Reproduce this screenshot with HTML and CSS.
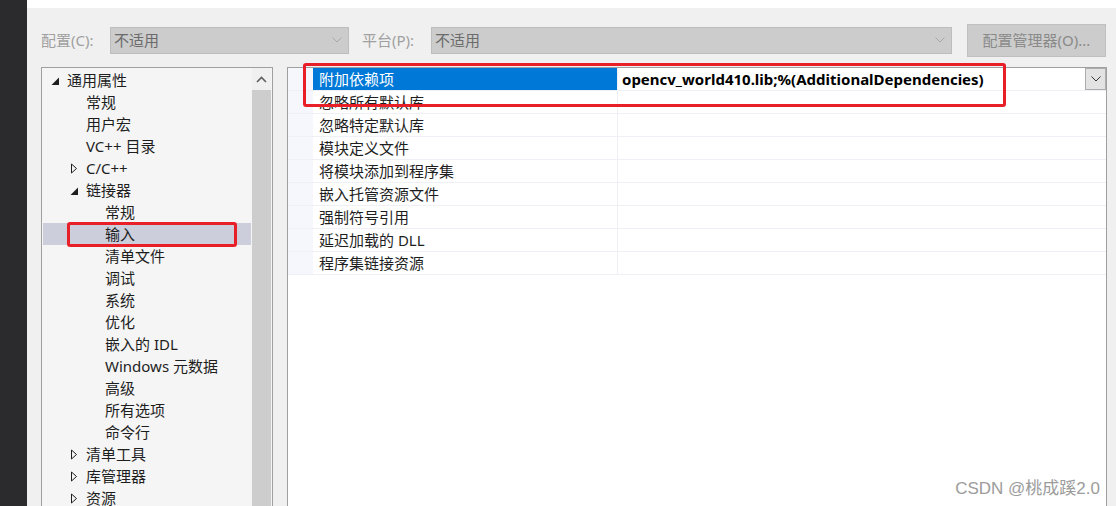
FILE: index.html
```html
<!DOCTYPE html>
<html lang="zh-CN">
<head>
    <meta charset="UTF-8">
    <title>属性页 - 链接器 - 输入</title>
    <link rel="stylesheet" href="styles.css">
</head>
<body>
    <div class="app">
        <div class="dock"></div>

        <div class="main">
            <div class="toolbar">
                <span class="tb-label">配置(C):</span>
                <div class="combo combo-config">
                    <span>不适用</span>
                    <svg class="combo-arrow" width="10" height="6" viewBox="0 0 10 6"><path d="M0.5 0.5 L5 5 L9.5 0.5" fill="none" stroke="#a9a9a9" stroke-width="1"/></svg>
                </div>
                <span class="tb-label">平台(P):</span>
                <div class="combo combo-platform">
                    <span>不适用</span>
                    <svg class="combo-arrow" width="10" height="6" viewBox="0 0 10 6"><path d="M0.5 0.5 L5 5 L9.5 0.5" fill="none" stroke="#a9a9a9" stroke-width="1"/></svg>
                </div>
                <button class="tb-button">配置管理器(O)...</button>
            </div>

            <div class="content">
                <!-- arbre des catégories -->
                <div class="tree-panel">
                    <ul class="tree">
                        <li class="lvl0"><svg class="twisty" width="16" height="22" viewBox="0 0 16 22"><polygon points="0.5,16 8,16 8,8.5" fill="#1e1e1e"/></svg>通用属性</li>
                        <li class="lvl1"><span class="twisty"></span>常规</li>
                        <li class="lvl1"><span class="twisty"></span>用户宏</li>
                        <li class="lvl1"><span class="twisty"></span>VC++ 目录</li>
                        <li class="lvl1"><svg class="twisty" width="16" height="22" viewBox="0 0 16 22"><polygon points="1.5,7 6.5,11.5 1.5,16" fill="none" stroke="#1e1e1e"/></svg>C/C++</li>
                        <li class="lvl1"><svg class="twisty" width="16" height="22" viewBox="0 0 16 22"><polygon points="0.5,16 8,16 8,8.5" fill="#1e1e1e"/></svg>链接器</li>
                        <li class="lvl2"><span class="twisty"></span>常规</li>
                        <li class="lvl2 selected"><span class="twisty"></span>输入<span class="mark mark-input"></span></li>
                        <li class="lvl2"><span class="twisty"></span>清单文件</li>
                        <li class="lvl2"><span class="twisty"></span>调试</li>
                        <li class="lvl2"><span class="twisty"></span>系统</li>
                        <li class="lvl2"><span class="twisty"></span>优化</li>
                        <li class="lvl2"><span class="twisty"></span>嵌入的 IDL</li>
                        <li class="lvl2"><span class="twisty"></span>Windows 元数据</li>
                        <li class="lvl2"><span class="twisty"></span>高级</li>
                        <li class="lvl2"><span class="twisty"></span>所有选项</li>
                        <li class="lvl2"><span class="twisty"></span>命令行</li>
                        <li class="lvl1"><svg class="twisty" width="16" height="22" viewBox="0 0 16 22"><polygon points="1.5,7 6.5,11.5 1.5,16" fill="none" stroke="#1e1e1e"/></svg>清单工具</li>
                        <li class="lvl1"><svg class="twisty" width="16" height="22" viewBox="0 0 16 22"><polygon points="1.5,7 6.5,11.5 1.5,16" fill="none" stroke="#1e1e1e"/></svg>库管理器</li>
                        <li class="lvl1"><svg class="twisty" width="16" height="22" viewBox="0 0 16 22"><polygon points="1.5,7 6.5,11.5 1.5,16" fill="none" stroke="#1e1e1e"/></svg>资源</li>
                    </ul>
                    <div class="scrollbar">
                        <div class="sb-up">
                            <svg width="11" height="7" viewBox="0 0 11 7"><path d="M1 6 L5.5 1.5 L10 6" fill="none" stroke="#606060" stroke-width="1.6"/></svg>
                        </div>
                        <div class="sb-thumb"></div>
                    </div>
                </div>

                <!-- grille des propriétés -->
                <div class="grid-panel">
                    <div class="prop-row selected">
                        <div class="gutter"></div>
                        <div class="prop-name">附加依赖项</div>
                        <div class="prop-value">
                            <span class="value-text">opencv_world410.lib;%(AdditionalDependencies)</span>
                            <span class="drop-btn">
                                <svg width="10" height="6" viewBox="0 0 10 6"><path d="M0.5 0.5 L5 5 L9.5 0.5" fill="none" stroke="#333" stroke-width="1"/></svg>
                            </span>
                        </div>
                    </div>
                    <div class="prop-row"><div class="gutter"></div><div class="prop-name">忽略所有默认库</div><div class="prop-value"></div></div>
                    <div class="prop-row"><div class="gutter"></div><div class="prop-name">忽略特定默认库</div><div class="prop-value"></div></div>
                    <div class="prop-row"><div class="gutter"></div><div class="prop-name">模块定义文件</div><div class="prop-value"></div></div>
                    <div class="prop-row"><div class="gutter"></div><div class="prop-name">将模块添加到程序集</div><div class="prop-value"></div></div>
                    <div class="prop-row"><div class="gutter"></div><div class="prop-name">嵌入托管资源文件</div><div class="prop-value"></div></div>
                    <div class="prop-row"><div class="gutter"></div><div class="prop-name">强制符号引用</div><div class="prop-value"></div></div>
                    <div class="prop-row"><div class="gutter"></div><div class="prop-name">延迟加载的 DLL</div><div class="prop-value"></div></div>
                    <div class="prop-row"><div class="gutter"></div><div class="prop-name">程序集链接资源</div><div class="prop-value"></div></div>

                    <span class="mark mark-deps"></span>
                </div>
            </div>
        </div>

        <div class="watermark">CSDN @桃成蹊2.0</div>
    </div>
</body>
</html>
```

FILE: styles.css
```css
* {
    margin: 0;
    padding: 0;
    box-sizing: border-box;
}

body {
    font-family: "Noto Sans", "Noto Sans CJK SC", sans-serif;
    font-size: 15px;
    color: #1e1e1e;
    background: #f0f0f0;
    overflow: hidden;
}

.app {
    position: relative;
    display: flex;
    width: 1116px;
    height: 506px;
    overflow: hidden;
}

.dock {
    width: 27px;
    background: #2b2b2d;
}

.main {
    flex: 1;
    display: flex;
    flex-direction: column;
    background: #f0f0f0;
    border-top: 8px solid #fff;
}

/* barre du haut */
.toolbar {
    display: flex;
    align-items: center;
    height: 33px;
    margin-top: 16px;
    padding-left: 14px;
    line-height: 20px;
}

.tb-label {
    width: 69px;
    margin-top: -2px;
    color: #a0a0a0;
    white-space: nowrap;
}

.combo {
    display: flex;
    align-items: center;
    justify-content: space-between;
    height: 27px;
    padding: 0 6px 2px 3px;
    background: #cccccc;
    border: 1px solid #bdbdbd;
    color: #6b6b6b;
}

.combo-config {
    width: 239px;
    margin-right: 13px;
}

.combo-platform {
    width: 521px;
    margin-right: 15px;
}

.tb-button {
    width: 139px;
    height: 33px;
    padding-bottom: 2px;
    background: #cccccc;
    border: 1px solid #c0c0c0;
    color: #8a8a8a;
    font-family: inherit;
    font-size: 15px;
}

/* contenu */
.content {
    flex: 1;
    display: flex;
    gap: 14px;
    margin-top: 10px;
    padding-left: 14px;
}

.tree-panel {
    display: flex;
    width: 232px;
    height: 460px;
    background: #f5f5f5;
    border: 1px solid #a0a0a0;
}

.tree {
    flex: 1;
    list-style: none;
    padding: 1px 1px 0 1px;
}

.tree li {
    position: relative;
    display: flex;
    align-items: center;
    height: 22px;
    line-height: 22px;
    white-space: nowrap;
}

.tree .twisty {
    flex: none;
    width: 16px;
    height: 22px;
}

.tree .lvl0 { padding-left: 8px; }
.tree .lvl1 { padding-left: 27px; }
.tree .lvl2 { padding-left: 46px; }

.tree .selected {
    background: #cccedb;
}

.scrollbar {
    width: 19px;
    margin-right: 1px;
    display: flex;
    flex-direction: column;
    background: #f0f0f0;
}

.sb-up {
    height: 22px;
    display: flex;
    align-items: center;
    justify-content: center;
}

.sb-thumb {
    flex: 1;
    background: #cdcdcd;
}

.grid-panel {
    position: relative;
    width: 820px;
    height: 460px;
    background: #fff;
    border: 1px solid #a0a0a0;
    border-bottom: none;
}

.prop-row {
    display: flex;
    height: 23px;
    border-bottom: 1px solid #eef0f6;
}

.gutter {
    width: 25px;
    background: #f5f7fc;
}

.prop-name {
    width: 305px;
    padding-left: 6px;
    line-height: 22px;
    border-right: 1px solid #eef0f6;
    white-space: nowrap;
}

.prop-value {
    flex: 1;
    display: flex;
    justify-content: space-between;
    padding-left: 4px;
}

.value-text {
    font-weight: bold;
    font-size: 15px;
    line-height: 22px;
    color: #000;
    white-space: nowrap;
}

.prop-row.selected .prop-name {
    background: #0078d7;
    color: #fff;
}

.drop-btn {
    display: flex;
    align-items: center;
    justify-content: center;
    width: 21px;
    height: 22px;
    background: #e3e3e3;
    border: 1px solid #adadad;
}

/* annotations rouges */
.mark {
    position: absolute;
    border: 3px solid #e81f27;
    border-radius: 3px;
    pointer-events: none;
}

.mark-input {
    left: 24px;
    top: -1px;
    width: 170px;
    height: 25px;
}

.mark-deps {
    left: 15px;
    top: -5px;
    width: 703px;
    height: 44px;
}

.watermark {
    position: absolute;
    right: 16px;
    bottom: 7px;
    font-family: "Liberation Sans", "Noto Sans CJK SC", sans-serif;
    font-size: 17px;
    color: #9c9c9c;
}
```
